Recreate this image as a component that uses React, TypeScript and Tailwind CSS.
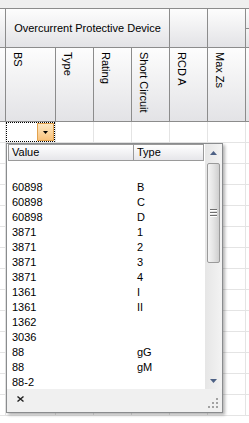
import React from "react";

const listRows: [string, string][] = [
  ["", ""],
  ["60898", "B"],
  ["60898", "C"],
  ["60898", "D"],
  ["3871", "1"],
  ["3871", "2"],
  ["3871", "3"],
  ["3871", "4"],
  ["1361", "I"],
  ["1361", "II"],
  ["1362", ""],
  ["3036", ""],
  ["88", "gG"],
  ["88", "gM"],
  ["88-2", ""],
];

const subHeaders = ["Type", "Rating", "Short Circuit", "RCD A", "Max Zs"];

const headCell =
  "border-r border-[#8c8c8c] bg-linear-to-b from-[#fdfdfd] to-[#e3e3e6]";

const GridRow = ({ first }: { first?: boolean }) => (
  <div className="flex h-[21px] border-b border-[#e4e4e4]">
    <div className="w-[6px] border-r border-[#e4e4e4]" />
    <div className="flex w-[50px] border-r border-[#e4e4e4]">
      {first && (
        <div className="flex flex-1 justify-end border border-dotted border-black">
          <div className="my-[0px] flex w-[17px] items-center justify-center border border-[#e2a24e] bg-linear-to-b from-[#fde9c4] to-[#f8c27c]">
            <svg width="5" height="3" viewBox="0 0 5 3">
              <path d="M0 0h5L2.5 3z" fill="#000" />
            </svg>
          </div>
        </div>
      )}
    </div>
    {subHeaders.map((h) => (
      <div key={h} className="w-[38px] border-r border-[#e4e4e4]" />
    ))}
    <div className="flex-1" />
  </div>
);

function ScrollBar() {
  return (
    <div className="flex w-[17px] flex-col bg-linear-to-r from-[#e6e6e6] to-[#f3f3f3]">
      <div className="flex h-[17px] items-center justify-center">
        <svg width="7" height="4" viewBox="0 0 7 4">
          <path d="M0 4L3.5 0L7 4z" fill="#4d6185" />
        </svg>
      </div>
      <div className="flex-1 px-[2px] pt-[2px]">
        <div className="flex h-[100px] flex-col items-center justify-center gap-[1px] rounded-[2px] border border-[#9a9a9a] bg-linear-to-r from-[#f4f4f4] via-[#e4e4e4] to-[#cfcfcf]">
          <div className="h-[2px] w-[7px] border-t border-[#6f6f6f] bg-white" />
          <div className="h-[2px] w-[7px] border-t border-[#6f6f6f] bg-white" />
          <div className="h-[2px] w-[7px] border-t border-[#6f6f6f] bg-white" />
        </div>
      </div>
      <div className="flex h-[17px] items-center justify-center">
        <svg width="7" height="4" viewBox="0 0 7 4">
          <path d="M0 0h7L3.5 4z" fill="#4d6185" />
        </svg>
      </div>
    </div>
  );
}

function Dropdown() {
  return (
    <div className="absolute left-[6px] top-[143px] flex h-[270px] w-[217px] flex-col border border-[#8a8c8e] bg-white shadow-[2px_2px_3px_rgba(0,0,0,0.3)]">
      <div className="flex h-[245px]">
        <div className="flex-1 overflow-hidden pl-[1px]">
          <div className="flex h-[17px] leading-[15px]">
            <div className="w-[126px] border border-[#9a9a9a] bg-linear-to-b from-[#ffffff] to-[#e6e6ea] pl-[3px]">
              Value
            </div>
            <div className="w-[70px] border-y border-r border-[#9a9a9a] bg-linear-to-b from-[#ffffff] to-[#e6e6ea] pl-[3px]">
              Type
            </div>
          </div>
          <div className="mt-[4px]">
            {listRows.map(([v, t], i) => (
              <div key={i} className="flex h-[15px] leading-[15px]">
                <div className="w-[126px] pl-[4px]">{v}</div>
                <div className="w-[70px] pl-[3px]">{t}</div>
              </div>
            ))}
          </div>
        </div>
        <ScrollBar />
      </div>
      <div className="flex flex-1 items-start justify-between bg-[#f0f0f0] pl-[10px] pr-[3px]">
        <svg className="mt-[7px]" width="7" height="6" viewBox="0 0 7 6">
          <path d="M0.5 0.5L6.5 5.5M6.5 0.5L0.5 5.5" stroke="#222" strokeWidth="1.4" />
        </svg>
        <svg className="mt-[8px]" width="12" height="12" viewBox="0 0 12 12">
          <g fill="#a2a2a2">
            <rect x="9" y="1" width="2" height="2" />
            <rect x="5" y="5" width="2" height="2" />
            <rect x="9" y="5" width="2" height="2" />
            <rect x="1" y="9" width="2" height="2" />
            <rect x="5" y="9" width="2" height="2" />
            <rect x="9" y="9" width="2" height="2" />
          </g>
        </svg>
      </div>
    </div>
  );
}

export default function App() {
  return (
    <div className="relative h-[423px] w-[249px] overflow-hidden bg-white font-['Liberation_Sans',Arial,sans-serif] text-[11px] text-black">
      <div className="h-[8px] bg-[#efefef]" />
      <div className="flex h-[40px] border-y border-[#8c8c8c]">
        <div className={`w-[6px] ${headCell}`} />
        <div className={`flex w-[164px] items-center justify-center ${headCell}`}>
          Overcurrent Protective Device
        </div>
        <div className={`w-[38px] ${headCell}`} />
        <div className={`w-[38px] ${headCell}`} />
        <div className="flex flex-1 flex-col">
          <div className="h-[20px] border-b border-[#8c8c8c] bg-linear-to-b from-[#fdfdfd] to-[#ececee]" />
          <div className="flex-1 bg-linear-to-b from-[#f4f4f4] to-[#e3e3e6]" />
        </div>
      </div>
      <div className="flex h-[74px] border-b border-[#8c8c8c]">
        <div className={`w-[6px] ${headCell}`} />
        <div className={`w-[50px] pl-[5px] pt-[4px] ${headCell}`}>
          <span className="leading-[13px] [writing-mode:vertical-rl]">BS</span>
        </div>
        {subHeaders.map((h) => (
          <div key={h} className={`w-[38px] pl-[5px] pt-[4px] ${headCell}`}>
            <span className="leading-[13px] [writing-mode:vertical-rl]">{h}</span>
          </div>
        ))}
        <div className="flex-1 bg-linear-to-b from-[#fdfdfd] to-[#e3e3e6]" />
      </div>
      <GridRow first />
      {Array.from({ length: 13 }).map((_, i) => (
        <GridRow key={i} />
      ))}
      <Dropdown />
    </div>
  );
}
